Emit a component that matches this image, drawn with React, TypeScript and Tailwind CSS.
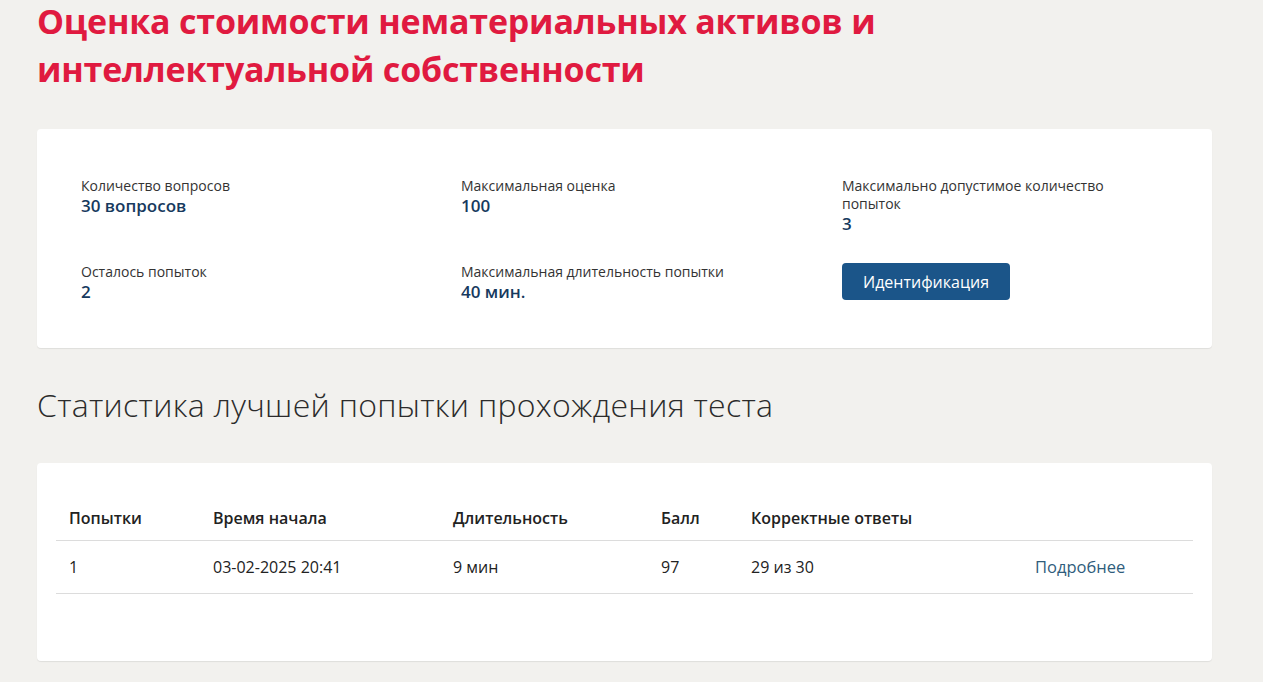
import React from "react";

const font = { fontFamily: '"Open Sans", "Noto Sans", sans-serif' };

function Info({ label, value }: { label: string; value: string }) {
  return (
    <div className="flex flex-col">
      <div className="text-[14px] leading-[18px] text-[#333333]">{label}</div>
      <div className="text-[17px] leading-[22px] font-semibold text-[#173a5e]">{value}</div>
    </div>
  );
}

export default function App() {
  return (
    <div className="min-h-[683px] bg-[#f2f1ee] px-[37px] pt-0 pb-[21px]" style={font}>
      <h1 className="-mt-[3px] text-[34px] leading-[48px] font-bold text-[#e01a40] max-w-[880px] tracking-[-0.2px]">
        Оценка стоимости нематериальных активов и интеллектуальной собственности
      </h1>
      <div className="mt-[36px] bg-white rounded-[4px] shadow-[0_1px_1px_rgba(0,0,0,0.08)] w-[1175px] pl-[44px] pt-[48px] pb-[45px]">
        <div className="grid grid-cols-[380px_381px_300px] gap-y-[28px]">
          <Info label="Количество вопросов" value="30 вопросов" />
          <Info label="Максимальная оценка" value="100" />
          <Info label="Максимально допустимое количество попыток" value="3" />
          <Info label="Осталось попыток" value="2" />
          <Info label="Максимальная длительность попытки" value="40 мин." />
          <div>
            <button className="h-[37px] w-[168px] rounded-[4px] bg-[#1b5589] text-white text-[16px]">
              Идентификация
            </button>
          </div>
        </div>
      </div>
      <h2 className="mt-[37px] text-[32px] leading-[40px] font-light tracking-[0.3px] text-[#2b2b2b]">
        Статистика лучшей попытки прохождения теста
      </h2>
      <div className="mt-[38px] bg-white rounded-[4px] shadow-[0_1px_1px_rgba(0,0,0,0.08)] w-[1175px] px-[19px] pt-[37px] pb-[67px]">
        <table className="w-full text-[16px] text-[#222222] border-collapse">
          <thead>
            <tr className="border-b border-[#dcdcdc]">
              <th className="w-[157px] text-left font-semibold pl-[13px] pt-[7px] pb-[11px] leading-[22px]">Попытки</th>
              <th className="w-[240px] text-left font-semibold pt-[7px] pb-[11px] leading-[22px]">Время начала</th>
              <th className="w-[208px] text-left font-semibold pt-[7px] pb-[11px] leading-[22px]">Длительность</th>
              <th className="w-[90px] text-left font-semibold pt-[7px] pb-[11px] leading-[22px]">Балл</th>
              <th className="w-[284px] text-left font-semibold pt-[7px] pb-[11px] leading-[22px]">Корректные ответы</th>
              <th className="text-left font-semibold"></th>
            </tr>
          </thead>
          <tbody>
            <tr className="border-b border-[#dcdcdc]">
              <td className="pl-[13px] h-[53px] align-middle">1</td>
              <td>03-02-2025 20:41</td>
              <td>9 мин</td>
              <td>97</td>
              <td>29 из 30</td>
              <td className="text-[#2f5d7c] text-[16.5px]">Подробнее</td>
            </tr>
          </tbody>
        </table>
      </div>
    </div>
  );
}
